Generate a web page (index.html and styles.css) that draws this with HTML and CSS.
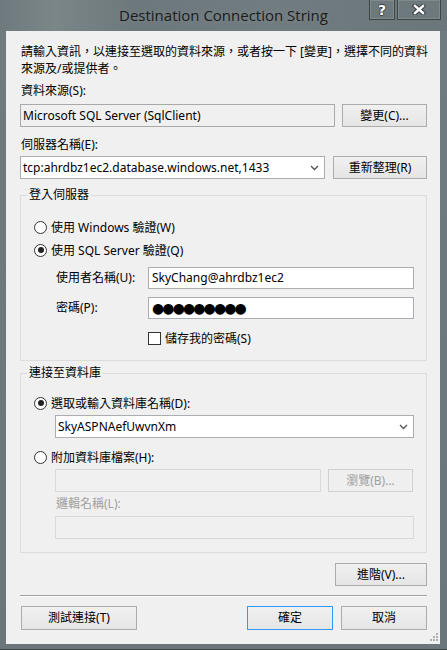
FILE: index.html
```html
<!DOCTYPE html>
<html lang="zh-Hant">
<head>
<meta charset="utf-8">
<title>Destination Connection String</title>
<link rel="stylesheet" href="styles.css">
</head>
<body>
<div class="window">
  <div class="titlebar">
    <div class="title">Destination Connection String</div>
    <div class="caption-btns">
      <div class="cbtn help">?</div>
      <div class="cbtn close">
        <svg width="14" height="11" viewBox="0 0 14 11"><path d="M3 2 L11 9 M11 2 L3 9" stroke="#3a4347" stroke-width="4.5" stroke-linecap="square"/><path d="M3 2 L11 9 M11 2 L3 9" stroke="#fff" stroke-width="2.4" stroke-linecap="square"/></svg>
      </div>
    </div>
  </div>
  <div class="client">
    <p class="intro">請輸入資訊，以連接至選取的資料來源，或者按一下 [變更]，選擇不同的資料<br>來源及/或提供者。</p>

    <div class="label mt6">資料來源(S):</div>
    <div class="row mt5">
      <div class="textbox readonly w315">Microsoft SQL Server (SqlClient)</div>
      <div class="btn w85">變更(C)...</div>
    </div>

    <div class="label mt10">伺服器名稱(E):</div>
    <div class="row mt3 gap8">
      <div class="combo w305">
        <span class="combo-text">tcp:ahrdbz1ec2.database.windows.net,1433</span>
        <svg class="chev" width="9" height="6" viewBox="0 0 9 6"><path d="M1 1 L4.5 4.5 L8 1" fill="none" stroke="#555" stroke-width="1.4"/></svg>
      </div>
      <div class="btn w94">重新整理(R)</div>
    </div>

    <div class="group g1">
      <span class="legend">登入伺服器</span>
      <div class="radio-row">
        <span class="radio"></span><span>使用 Windows 驗證(W)</span>
      </div>
      <div class="radio-row mt7">
        <span class="radio checked"></span><span>使用 SQL Server 驗證(Q)</span>
      </div>
      <div class="field-row mt9">
        <span class="field-label">使用者名稱(U):</span>
        <div class="textbox w266 h22">SkyChang@ahrdbz1ec2</div>
      </div>
      <div class="field-row mt8">
        <span class="field-label">密碼(P):</span>
        <div class="textbox w266 h22 pwd">●●●●●●●●●</div>
      </div>
      <div class="check-row">
        <span class="checkbox"></span><span>儲存我的密碼(S)</span>
      </div>
    </div>

    <div class="group g2">
      <span class="legend">連接至資料庫</span>
      <div class="radio-row">
        <span class="radio checked"></span><span>選取或輸入資料庫名稱(D):</span>
      </div>
      <div class="indent mt4">
        <div class="combo w359 h22">
          <span class="combo-text">SkyASPNAefUwvnXm</span>
          <svg class="chev" width="9" height="6" viewBox="0 0 9 6"><path d="M1 1 L4.5 4.5 L8 1" fill="none" stroke="#555" stroke-width="1.4"/></svg>
        </div>
      </div>
      <div class="radio-row mt11">
        <span class="radio"></span><span>附加資料庫檔案(H):</span>
      </div>
      <div class="indent row mt4">
        <div class="textbox disabled w266"></div>
        <div class="btn disabled w85">瀏覽(B)...</div>
      </div>
      <div class="indent label disabled-text mt4 pl1">邏輯名稱(L):</div>
      <div class="indent mt4">
        <div class="textbox disabled w359"></div>
      </div>
    </div>

    <div class="adv-row">
      <div class="btn w92">進階(V)...</div>
    </div>

    <div class="separator"></div>

    <div class="footer">
      <div class="btn w116">測試連接(T)</div>
      <div class="footer-right">
        <div class="btn default w86">確定</div>
        <div class="btn w86">取消</div>
      </div>
    </div>

    <svg class="grip" width="10" height="10" viewBox="0 0 10 10">
      <rect x="7" y="1" width="2" height="2" fill="#b0b0b0"/>
      <rect x="4" y="4" width="2" height="2" fill="#b0b0b0"/>
      <rect x="7" y="4" width="2" height="2" fill="#b0b0b0"/>
      <rect x="1" y="7" width="2" height="2" fill="#b0b0b0"/>
      <rect x="4" y="7" width="2" height="2" fill="#b0b0b0"/>
      <rect x="7" y="7" width="2" height="2" fill="#b0b0b0"/>
    </svg>
  </div>
</div>
</body>
</html>
```

FILE: styles.css
```css
* { box-sizing: border-box; }
html, body { margin: 0; padding: 0; }
body {
  width: 447px;
  height: 650px;
  overflow: hidden;
  background: #6f7b7f;
}
.window {
  width: 447px;
  height: 650px;
  background: linear-gradient(180deg, #6c787c 0px, #75817f 30px, #6f7b7f 31px, #6a7679 100%);
  border-bottom: 1px solid #40494c;
  position: relative;
}
.titlebar {
  height: 31px;
  position: relative;
  background: linear-gradient(90deg, #6d797c 0%, #7b8689 12%, #6c787b 30%, #717c80 60%, #6a7679 100%);
}
.title {
  text-align: center;
  font-family: "Open Sans", "Noto Sans", sans-serif;
  font-size: 15px;
  line-height: 30px;
  color: #1b1b1b;
  text-shadow: 0 0 6px rgba(255,255,255,0.15);
}
.caption-btns {
  position: absolute;
  top: 0;
  right: 6px;
  display: flex;
  gap: 2px;
}
.cbtn {
  height: 20px;
  border: 1px solid #3c464a;
  border-top: none;
  box-shadow: inset 0 0 0 1px #7f8a8d;
  background: #6d797c;
  display: flex;
  align-items: center;
  justify-content: center;
}
.cbtn.help {
  width: 26px;
  color: #fff;
  font-family: "DejaVu Sans", sans-serif;
  font-weight: bold;
  font-size: 14px;
  text-shadow: 1px 0 0 #3a4347, -1px 0 0 #3a4347, 0 1px 0 #3a4347, 0 -1px 0 #3a4347;
}
.cbtn.close { width: 44px; }

.client {
  position: relative;
  margin-left: 6px;
  width: 434px;
  height: 613px;
  background: #f0f0f0;
  padding: 12px 13px 0 14px;
  font-family: "Noto Sans", "Noto Sans CJK TC", sans-serif;
  font-size: 12px;
  color: #000;
}
.intro {
  margin: 0;
  line-height: 17px;
  padding-left: 1px;
  white-space: nowrap;
}
.label { line-height: 16px; height: 16px; padding-left: 1px; }
.mt3 { margin-top: 3px; }
.mt4 { margin-top: 4px; }
.mt5 { margin-top: 5px; }
.mt6 { margin-top: 6px; }
.mt7 { margin-top: 7px; }
.mt8 { margin-top: 8px; }
.mt9 { margin-top: 9px; }
.mt10 { margin-top: 10px; }
.mt11 { margin-top: 11px; }
.pl1 { padding-left: 1px; }

.row { display: flex; gap: 7px; align-items: flex-start; }
.gap8 { gap: 8px; }

.w85 { width: 85px; }
.w86 { width: 86px; }
.w92 { width: 92px; }
.w94 { width: 94px; }
.w116 { width: 116px; }
.w266 { width: 266px; }
.w305 { width: 305px; }
.w315 { width: 315px; }
.w359 { width: 359px; }

.textbox {
  height: 23px;
  border: 1px solid #abadb3;
  background: #fff;
  padding: 0 3px;
  line-height: 21px;
  white-space: nowrap;
  overflow: hidden;
}
.h22 { height: 22px; line-height: 20px; }
.textbox.readonly { background: #f0f0f0; border-color: #a9a9a9; padding-left: 2px; }
.textbox.disabled { background: #f0f0f0; border-color: #d9d9d9; }
.textbox.pwd {
  font-family: "DejaVu Sans", sans-serif;
  font-size: 14px;
  letter-spacing: -1.9px;
  padding-left: 3px;
}

.combo {
  height: 23px;
  border: 1px solid #abadb3;
  background: #fff;
  display: flex;
  align-items: center;
  justify-content: space-between;
  padding: 0 5px 0 2px;
}
.combo.h22 { line-height: normal; }
.combo-text { white-space: nowrap; line-height: 20px; }
.chev { flex: none; }

.btn {
  height: 23px;
  border: 1px solid #acacac;
  background: linear-gradient(180deg, #f0f0f0 0%, #e5e5e5 100%);
  text-align: center;
  line-height: 21px;
  white-space: nowrap;
}
.btn.disabled { border-color: #d0d0d0; background: #efefef; color: #a0a0a0; }
.btn.default { border-color: #3399ff; }
.disabled-text { color: #a0a0a0; }

.group {
  position: relative;
  border: 1px solid #dcdcdc;
  width: 407px;
  padding: 0 12px 0 13px;
}
.g1 { margin-top: 16px; padding-top: 23px; padding-bottom: 14px; }
.g2 { margin-top: 12px; padding-top: 21px; padding-bottom: 13px; }
.legend {
  position: absolute;
  top: -9px;
  left: 6px;
  padding: 0 2px;
  background: #f0f0f0;
  line-height: 16px;
}

.radio-row, .check-row {
  display: flex;
  align-items: center;
  gap: 4px;
  height: 16px;
}
.radio {
  width: 13px;
  height: 13px;
  border-radius: 50%;
  border: 1px solid #333;
  background: #fff;
  position: relative;
  flex: none;
}
.radio.checked::after {
  content: "";
  position: absolute;
  left: 2.5px;
  top: 2.5px;
  width: 6px;
  height: 6px;
  border-radius: 50%;
  background: #222;
}
.field-row {
  display: flex;
  align-items: center;
  padding-left: 22px;
}
.field-label { width: 92px; flex: none; line-height: 16px; }
.check-row { margin-top: 11px; padding-left: 114px; }
.checkbox {
  width: 13px;
  height: 13px;
  border: 1px solid #333;
  background: #fff;
  flex: none;
}
.indent { margin-left: 21px; }

.adv-row { display: flex; justify-content: flex-end; margin-top: 10px; }
.separator {
  margin-top: 9px;
  height: 2px;
  border-top: 1px solid #a0a0a0;
  border-bottom: 1px solid #ffffff;
}
.footer {
  margin-top: 9px;
  display: flex;
  justify-content: space-between;
  padding-left: 1px;
}
.footer .btn { height: 24px; line-height: 22px; }
.footer-right { display: flex; gap: 8px; }

.grip {
  position: absolute;
  right: 1px;
  bottom: 2px;
}
```
